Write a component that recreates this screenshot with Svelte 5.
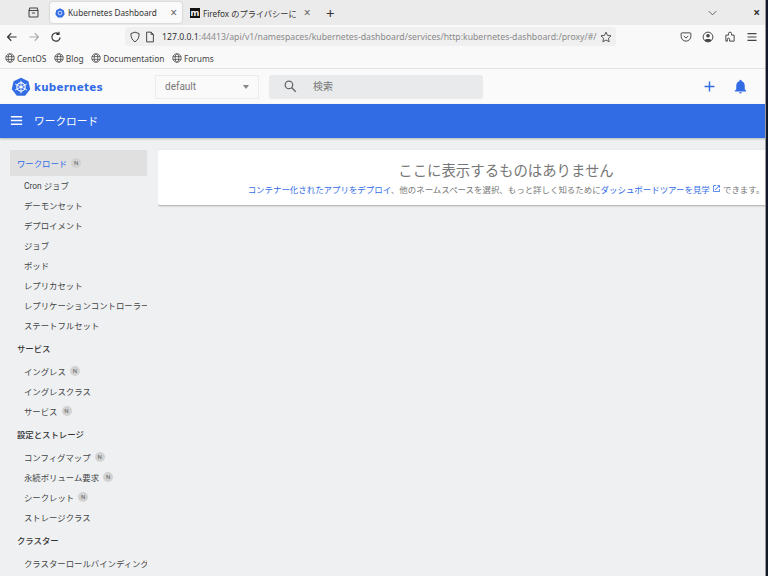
<script>
  const bookmarks = ['CentOS', 'Blog', 'Documentation', 'Forums'];

  const sections = [
    {
      title: 'ワークロード',
      active: true,
      items: [
        { label: 'Cron ジョブ' },
        { label: 'デーモンセット' },
        { label: 'デプロイメント' },
        { label: 'ジョブ' },
        { label: 'ポッド' },
        { label: 'レプリカセット' },
        { label: 'レプリケーションコントローラー' },
        { label: 'ステートフルセット' }
      ]
    },
    {
      title: 'サービス',
      items: [
        { label: 'イングレス', ns: true },
        { label: 'イングレスクラス' },
        { label: 'サービス', ns: true }
      ]
    },
    {
      title: '設定とストレージ',
      items: [
        { label: 'コンフィグマップ', ns: true },
        { label: '永続ボリューム要求', ns: true },
        { label: 'シークレット', ns: true },
        { label: 'ストレージクラス' }
      ]
    },
    {
      title: 'クラスター',
      items: [{ label: 'クラスターロールバインディング' }]
    }
  ];
</script>

<div class="desktop">
  <div class="window">
    <div class="tabbar">
      <svg class="tabs-icon" viewBox="0 0 16 16" width="13" height="13">
        <path d="M2.500 5.500h11v7a1 1 0 0 1-1 1h-9a1 1 0 0 1-1-1zM3.500 2.500h9l1 3h-11zM6 8.500h4" fill="none" stroke="#444" stroke-width="1.300" />
      </svg>
      <div class="tab current">
        <svg class="favicon" viewBox="0 0 16 16" width="10" height="10">
          <path d="M8 .5l6 2.900 1.500 6.400-4.100 5.200H4.600L.5 9.800 2 3.400z" fill="#326ce5" />
          <circle cx="8" cy="8" r="3" fill="none" stroke="#fff" stroke-width="1.200" />
        </svg>
        <span class="tab-title">Kubernetes Dashboard</span>
        <span class="tab-x">×</span>
      </div>
      <div class="tab other">
        <span class="moz">m</span>
        <span class="tab-title clip">Firefox のプライバシーに</span>
        <span class="tab-x">×</span>
      </div>
      <span class="newtab">+</span>
      <svg class="chevron" viewBox="0 0 12 8" width="9" height="6">
        <path d="M1 1.500l5 5 5-5" fill="none" stroke="#555" stroke-width="1.200" />
      </svg>
      <span class="close">×</span>
    </div>

    <div class="navbar">
      <svg class="nav-icon" viewBox="0 0 16 16" width="12" height="12">
        <path d="M14 8H2.500M7 3L2 8l5 5" fill="none" stroke="#333" stroke-width="1.500" />
      </svg>
      <svg class="nav-icon" viewBox="0 0 16 16" width="12" height="12">
        <path d="M2 8h11.500M9 3l5 5-5 5" fill="none" stroke="#aaa" stroke-width="1.500" />
      </svg>
      <svg class="nav-icon" viewBox="0 0 16 16" width="12" height="12">
        <path d="M13.500 8.500A5.500 5.500 0 1 1 11.500 3.800M12 1v3.500H8.500" fill="none" stroke="#333" stroke-width="1.500" />
      </svg>
      <div class="urlbar">
        <svg viewBox="0 0 16 16" width="12" height="12">
          <path d="M8 1.500l5.500 2c0 5-1.500 8.500-5.500 11-4-2.500-5.500-6-5.500-11z" fill="none" stroke="#444" stroke-width="1.300" />
        </svg>
        <svg viewBox="0 0 16 16" width="12" height="12">
          <path d="M3.500 1.500h6l3 3v10h-9zM9.500 1.500v3h3" fill="none" stroke="#444" stroke-width="1.300" />
        </svg>
        <span class="url"><b>127.0.0.1</b>:44413/api/v1/namespaces/kubernetes-dashboard/services/http:kubernetes-dashboard:/proxy/#/</span>
        <svg class="star" viewBox="0 0 16 16" width="12" height="12">
          <path d="M8 1.500l2 4.300 4.700.6-3.400 3.200.9 4.700L8 12l-4.200 2.300.9-4.700L1.300 6.400 6 5.800z" fill="none" stroke="#444" stroke-width="1.200" />
        </svg>
      </div>
      <div class="tools">
        <svg viewBox="0 0 16 16" width="12" height="12">
          <path d="M2.500 2.500h11a1 1 0 0 1 1 1V7a6.500 6.500 0 0 1-13 0V3.500a1 1 0 0 1 1-1zM5 6.500l3 3 3-3" fill="none" stroke="#444" stroke-width="1.300" />
        </svg>
        <svg viewBox="0 0 16 16" width="12" height="12">
          <circle cx="8" cy="8" r="6.500" fill="none" stroke="#444" stroke-width="1.300" />
          <circle cx="8" cy="6.300" r="2.400" fill="#444" />
          <path d="M3.500 12.500c1-2.500 8-2.500 9 0-2 2.300-7 2.300-9 0z" fill="#444" />
        </svg>
        <svg viewBox="0 0 16 16" width="12" height="12">
          <path d="M2.500 5.500h3.500V3.500a2 2 0 0 1 4 0v2h3.500v8h-6v-2.500a1.500 1.500 0 0 0-3 0v2.500h-2z" fill="none" stroke="#444" stroke-width="1.300" />
        </svg>
        <svg viewBox="0 0 16 16" width="12" height="12">
          <path d="M2 3.500h12M2 8h12M2 12.500h12" fill="none" stroke="#444" stroke-width="1.400" />
        </svg>
      </div>
    </div>

    <div class="bookmarks">
      {#each bookmarks as mark}
        <span class="mark">
          <svg viewBox="0 0 16 16" width="10" height="10">
            <circle cx="8" cy="8" r="6.800" fill="none" stroke="#444" stroke-width="1.200" />
            <ellipse cx="8" cy="8" rx="3" ry="6.800" fill="none" stroke="#444" stroke-width="1.200" />
            <path d="M1.500 5.800h13M1.500 10.200h13" stroke="#444" stroke-width="1.200" />
          </svg>
          {mark}
        </span>
      {/each}
    </div>

    <header class="topbar">
      <div class="brand">
        <svg viewBox="0 0 24 24" width="20" height="20">
          <path d="M12 .8l8.900 4.300 2.200 9.600-6.200 7.700H7.100L.9 14.700 3.100 5.100z" fill="#326ce5" />
          <circle cx="12" cy="12" r="5" fill="none" stroke="#fff" stroke-width="1.400" />
          <path d="M12 4.500v15M5 8.500l14 7M19 8.500l-14 7" stroke="#fff" stroke-width="1.100" />
          <circle cx="12" cy="12" r="1.400" fill="#fff" />
        </svg>
        <span class="brand-name">kubernetes</span>
      </div>
      <div class="ns-select">
        <span>default</span>
        <i class="caret"></i>
      </div>
      <div class="search">
        <svg viewBox="0 0 24 24" width="15" height="15">
          <circle cx="9.500" cy="9.500" r="6" fill="none" stroke="#666" stroke-width="2" />
          <path d="M14 14l6.500 6.500" stroke="#666" stroke-width="2.200" />
        </svg>
        <span>検索</span>
      </div>
      <div class="actions">
        <svg viewBox="0 0 24 24" width="17" height="17">
          <path d="M12 5v14M5 12h14" stroke="#326ce5" stroke-width="2" />
        </svg>
        <svg viewBox="0 0 24 24" width="17" height="17">
          <path d="M12 22a2 2 0 0 0 2-2h-4a2 2 0 0 0 2 2zM18 16v-5c0-3.100-1.600-5.600-4.500-6.300V4a1.500 1.500 0 0 0-3 0v.7C7.600 5.400 6 7.900 6 11v5l-2 2v1h16v-1z" fill="#326ce5" />
        </svg>
      </div>
    </header>

    <div class="toolbar">
      <svg viewBox="0 0 24 24" width="15" height="15">
        <path d="M3 6h18M3 12h18M3 18h18" stroke="#fff" stroke-width="2.400" />
      </svg>
      <span>ワークロード</span>
    </div>

    <div class="body">
      <nav class="sidebar">
        {#each sections as section}
          <div class="section" class:active={section.active}>
            <span>{section.title}</span>
            {#if section.active}<i class="chip">N</i>{/if}
          </div>
          {#each section.items as item}
            <div class="item">
              <span>{item.label}</span>
              {#if item.ns}<i class="chip">N</i>{/if}
            </div>
          {/each}
        {/each}
      </nav>
      <main class="content">
        <div class="card">
          <h2>ここに表示するものはありません</h2>
          <p>
            <a href="#deploy">コンテナー化されたアプリをデプロイ</a>、他のネームスペースを選択、もっと詳しく知るために<a href="#tour">ダッシュボードツアーを見学</a>
            <svg viewBox="0 0 24 24" width="9" height="9">
              <path d="M19 19H5V5h6V3H5a2 2 0 0 0-2 2v14a2 2 0 0 0 2 2h14a2 2 0 0 0 2-2v-6h-2zM14 3v2h3.600l-9.800 9.800 1.400 1.400L19 6.400V10h2V3z" fill="#326ce5" />
            </svg>
            できます。
          </p>
        </div>
      </main>
    </div>
  </div>
</div>

<style>
  :global(body) {
    margin: 0;
    overflow: hidden;
  }

  .desktop {
    width: 768px;
    height: 576px;
    background: #10182a;
    overflow: hidden;
  }

  .window {
    width: 765px;
    height: 576px;
    box-sizing: content-box;
    border-right: 1px solid #9a9a9a;
    overflow: hidden;
    display: flex;
    flex-direction: column;
    background: #eef0f2;
    font-family: Roboto, "Noto Sans CJK JP", sans-serif;
  }

  .tabbar {
    height: 25px;
    flex: none;
    display: flex;
    align-items: center;
    background: #ebebeb;
    padding-left: 27px;
    color: #333;
    font-size: 8.200px;
    font-family: "Noto Sans", "Noto Sans CJK JP", sans-serif;
  }

  .tabs-icon {
    margin-right: 10px;
  }

  .tab {
    width: 124px;
    height: 21px;
    box-sizing: border-box;
    display: flex;
    align-items: center;
    gap: 3px;
    padding: 0 5px;
    border-radius: 3px;
  }

  .tab.current {
    background: #fafafa;
    box-shadow: 0 0 2px rgba(0, 0, 0, 0.25);
    margin-right: 6px;
    width: 132px;
  }

  .tab.other {
    padding: 0 1.500px 0 2px;
  }

  .tab-title {
    flex: 1;
    white-space: nowrap;
    overflow: hidden;
  }

  .tab-x {
    color: #666;
    font-size: 12px;
  }

  .moz {
    width: 10px;
    height: 10px;
    background: #111;
    color: #fff;
    font-size: 9px;
    line-height: 9px;
    text-align: center;
    font-weight: 700;
  }

  .newtab {
    font-size: 15px;
    margin-left: 14px;
    margin-right: auto;
  }

  .chevron {
    margin-right: 36px;
  }

  .close {
    font-size: 12px;
    font-weight: 700;
    margin-right: 5px;
  }

  .navbar {
    height: 23px;
    flex: none;
    display: flex;
    align-items: center;
    background: #f9f9fa;
    padding-left: 6px;
  }

  .nav-icon {
    margin-right: 10px;
  }

  .urlbar {
    margin-left: 53px;
    width: 491px;
    height: 19px;
    box-sizing: border-box;
    display: flex;
    align-items: center;
    gap: 3px;
    padding: 0 4px 0 4px;
    background: #f0f0f1;
    border-radius: 3px;
  }

  .url {
    flex: 1;
    overflow: hidden;
    white-space: nowrap;
    font-family: "Noto Sans", sans-serif;
    font-size: 8.700px;
    color: #8a8a8a;
    margin-left: 3px;
  }

  .url b {
    color: #333;
    font-weight: 400;
  }

  .tools {
    display: flex;
    gap: 10px;
    margin-left: 64px;
  }

  .bookmarks {
    height: 20px;
    flex: none;
    display: flex;
    align-items: center;
    gap: 7.500px;
    padding-left: 5px;
    background: #f9f9fa;
    border-bottom: 1px solid #e2e2e2;
    font-family: "Noto Sans", sans-serif;
    font-size: 8.400px;
    color: #444;
  }

  .mark {
    display: flex;
    align-items: center;
    gap: 2px;
  }

  .topbar {
    height: 35px;
    flex: none;
    display: flex;
    align-items: center;
    background: #fafafa;
  }

  .brand {
    width: 155px;
    display: flex;
    align-items: center;
    gap: 3px;
    padding-left: 11px;
    box-sizing: border-box;
  }

  .brand-name {
    color: #326ce5;
    font-family: "DejaVu Sans", sans-serif;
    font-weight: 700;
    font-size: 10.300px;
    letter-spacing: 0.3px;
  }

  .ns-select {
    width: 104px;
    height: 24px;
    box-sizing: border-box;
    display: flex;
    align-items: center;
    justify-content: space-between;
    padding: 0 9px;
    border: 1px solid #ececec;
    color: #777;
    font-size: 10px;
  }

  .caret {
    border: 3.500px solid transparent;
    border-top: 4px solid #888;
    margin-top: 4px;
  }

  .search {
    width: 214px;
    height: 24px;
    margin-left: 10px;
    display: flex;
    align-items: center;
    gap: 15px;
    padding-left: 14px;
    box-sizing: border-box;
    background: #e8eaeb;
    color: #777;
    font-size: 10px;
    line-height: 22px;
    border-radius: 2px;
  }

  .actions {
    margin-left: auto;
    display: flex;
    gap: 14px;
    align-items: center;
    padding-right: 16px;
  }

  .toolbar {
    height: 34px;
    box-sizing: border-box;
    padding: 0 0 1px 9px;
    flex: none;
    display: flex;
    align-items: center;
    gap: 10px;
    background: #326ce5;
    color: #fff;
    font-size: 10.700px;
    box-shadow: 0 1px 2px rgba(0, 0, 0, 0.25);
  }

  .body {
    flex: 1;
    display: flex;
    min-height: 0;
  }

  .sidebar {
    width: 158px;
    flex: none;
    box-sizing: border-box;
    padding: 12px 11px 0 10px;
  }

  .section {
    height: 26.500px;
    display: flex;
    align-items: center;
    gap: 4px;
    padding-left: 7px;
    color: #333;
    font-size: 8.400px;
    font-weight: 500;
  }

  .section.active {
    height: 26px;
    margin-bottom: -0.500px;
    background: #e0e0e0;
    color: #326ce5;
    font-weight: 400;
  }

  .item {
    height: 19.900px;
    display: flex;
    align-items: center;
    gap: 4px;
    padding-left: 14px;
    color: #444;
    font-size: 8.400px;
    white-space: nowrap;
    overflow: hidden;
  }

  .chip {
    width: 10px;
    height: 10px;
    flex: none;
    border-radius: 50%;
    background: #d2d2d2;
    color: #666;
    font-size: 6px;
    font-style: normal;
    line-height: 10px;
    text-align: center;
  }

  .content {
    flex: 1;
    min-width: 0;
    padding-top: 12px;
    overflow: hidden;
  }

  .card {
    width: 696px;
    height: 55px;
    box-sizing: border-box;
    padding-top: 12px;
    background: #fff;
    border-radius: 2px 0 0 2px;
    box-shadow: 0 1px 2px rgba(0, 0, 0, 0.3);
    text-align: center;
    overflow: hidden;
  }

  h2 {
    margin: 0;
    font-size: 14.400px;
    font-weight: 400;
    line-height: 19px;
    color: #777;
  }

  p {
    margin: 3px 0 0;
    font-size: 8.450px;
    line-height: 13px;
    color: #777;
    white-space: nowrap;
  }

  a {
    color: #326ce5;
    text-decoration: none;
  }
</style>
